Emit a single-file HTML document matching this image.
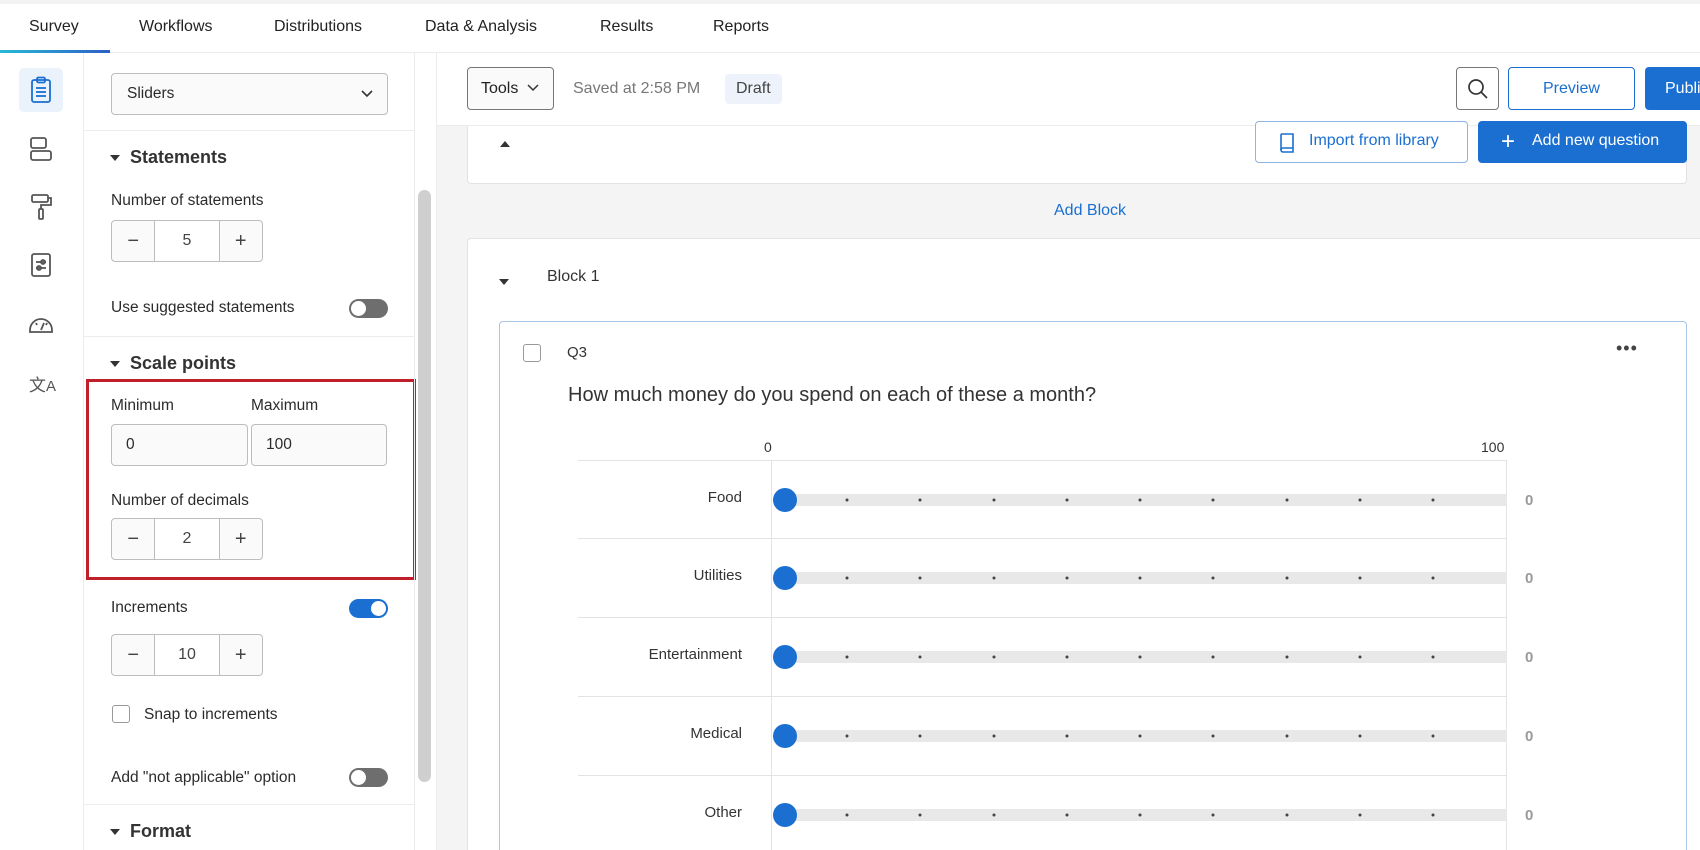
<!DOCTYPE html>
<html style="width:1700px;height:850px;overflow:hidden"><head><meta charset="utf-8"><style>
*{box-sizing:border-box;margin:0;padding:0}
html,body{width:1700px;height:850px;overflow:hidden}
body{background:#fff;font-family:"Liberation Sans",sans-serif;color:#2b2b2b;position:relative}
.a{position:absolute}
.t{position:absolute;white-space:nowrap}
.nav{font-size:16px;color:#222;top:18px}
.lbl{font-size:15.5px;color:#2b2b2b}
.hdr{font-size:18px;font-weight:bold;color:#333}
.box{position:absolute;border:1px solid #bdbdbd;border-radius:4px;background:#fafafa}
.step{position:absolute;width:152px;height:42px;border:1px solid #bdbdbd;border-radius:4px;background:#fafafa;display:flex;font-size:16px}
.step div{display:flex;align-items:center;justify-content:center;color:#444}
.step .m{width:44px;border-right:1px solid #bdbdbd;font-size:20px}
.step .v{width:65px;background:#fff;border-right:1px solid #bdbdbd}
.step .p{width:43px;font-size:20px}
.tog{position:absolute;width:39px;height:19px;border-radius:10px;background:#6e6e6e}
.tog::after{content:"";position:absolute;left:2px;top:2px;width:15px;height:15px;border-radius:50%;background:#fff}
.tog.on{background:#1a6fd1}
.tog.on::after{left:22px}
.tri{position:absolute;width:0;height:0;border-left:5px solid transparent;border-right:5px solid transparent;border-top:6px solid #333}
.row{position:absolute;left:578px;width:929px;height:74px;border-top:1px solid #e3e3e3}
.rl{position:absolute;font-size:15px;color:#333}
.track{position:absolute;left:785px;width:722px;height:12px;background:#e8e8e8}
.hd{position:absolute;left:773px;width:24px;height:24px;border-radius:50%;background:#1a6fd1}
.val{position:absolute;left:1525px;font-size:15px;color:#9a9a9a;font-weight:bold}
</style></head><body>
<div class="a" style="left:0;top:0;width:1700px;height:850px;overflow:hidden">
<div class="a" style="left:0;top:0;width:1700px;height:4px;background:#f3f3f3"></div>
<div class="a" style="left:0;top:52px;width:1700px;height:1px;background:#ececec"></div>
<div class="t nav" style="left:29px">Survey</div>
<div class="t nav" style="left:139px">Workflows</div>
<div class="t nav" style="left:274px">Distributions</div>
<div class="t nav" style="left:425px">Data &amp; Analysis</div>
<div class="t nav" style="left:600px">Results</div>
<div class="t nav" style="left:713px">Reports</div>
<div class="a" style="left:0;top:50px;width:110px;height:3px;background:linear-gradient(90deg,#28b9d6,#2c5fc8)"></div>

<div class="a" style="left:83px;top:53px;width:1px;height:797px;background:#ececec"></div>
<div class="a" style="left:19px;top:68px;width:44px;height:44px;border-radius:5px;background:#eaf2fc"></div>
<svg class="a" style="left:28px;top:76px" width="26" height="28" viewBox="0 0 26 28" fill="none" stroke="#1a6fd1" stroke-width="1.8"><rect x="4" y="4" width="18" height="22" rx="2"/><rect x="9" y="1.5" width="8" height="5" rx="1.5"/><line x1="8" y1="12" x2="18" y2="12"/><line x1="8" y1="16" x2="18" y2="16"/><line x1="8" y1="20" x2="18" y2="20"/></svg>
<svg class="a" style="left:28px;top:135px" width="26" height="28" viewBox="0 0 26 28" fill="none" stroke="#555" stroke-width="1.8"><rect x="3" y="3" width="15" height="10" rx="2"/><rect x="3" y="16" width="20" height="9" rx="2"/></svg>
<svg class="a" style="left:28px;top:192px" width="26" height="30" viewBox="0 0 26 30" fill="none" stroke="#555" stroke-width="1.8"><rect x="4" y="3" width="16" height="7" rx="1.5"/><path d="M20 6h3v7H13v4"/><rect x="11" y="17" width="4" height="10" rx="1"/></svg>
<svg class="a" style="left:28px;top:251px" width="26" height="28" viewBox="0 0 26 28" fill="none" stroke="#555" stroke-width="1.8"><rect x="4" y="3" width="18" height="22" rx="2"/><line x1="8" y1="11" x2="18" y2="11"/><circle cx="15" cy="11" r="2"/><line x1="8" y1="17" x2="18" y2="17"/><circle cx="11" cy="17" r="2"/></svg>
<svg class="a" style="left:27px;top:311px" width="28" height="24" viewBox="0 0 28 24" fill="none" stroke="#555" stroke-width="1.8"><path d="M3 19a11 11 0 0 1 22 0v2H3z"/><line x1="14" y1="19" x2="17" y2="12"/><line x1="9" y1="12" x2="10" y2="14"/><line x1="19" y1="14" x2="20" y2="12"/></svg>
<div class="t" style="left:29px;top:371px;font-size:17px;color:#555;font-family:'Liberation Sans','Noto Sans CJK SC',sans-serif">文<span style="font-size:15px">A</span></div>

<div class="box" style="left:111px;top:73px;width:277px;height:42px;background:#fafafa"></div>
<div class="t lbl" style="left:127px;top:85px">Sliders</div>
<svg class="a" style="left:360px;top:89px" width="14" height="10" viewBox="0 0 14 10" fill="none" stroke="#333" stroke-width="1.6"><path d="M2 2l5 5 5-5"/></svg>
<div class="a" style="left:84px;top:130px;width:330px;height:1px;background:#ededed"></div>
<div class="tri" style="left:110px;top:155px"></div>
<div class="t hdr" style="left:130px;top:147px">Statements</div>
<div class="t lbl" style="left:111px;top:192px">Number of statements</div>
<div class="step" style="left:111px;top:220px"><div class="m">−</div><div class="v">5</div><div class="p">+</div></div>
<div class="t lbl" style="left:111px;top:299px">Use suggested statements</div>
<div class="tog" style="left:349px;top:299px"></div>
<div class="a" style="left:84px;top:336px;width:330px;height:1px;background:#ededed"></div>
<div class="tri" style="left:110px;top:361px"></div>
<div class="t hdr" style="left:130px;top:353px">Scale points</div>
<div class="a" style="left:86px;top:379px;width:330px;height:201px;border:3px solid #c0202a"></div>
<div class="t lbl" style="left:111px;top:397px">Minimum</div>
<div class="t lbl" style="left:251px;top:397px">Maximum</div>
<div class="box" style="left:111px;top:424px;width:137px;height:42px"></div>
<div class="t lbl" style="left:126px;top:436px">0</div>
<div class="box" style="left:251px;top:424px;width:136px;height:42px"></div>
<div class="t lbl" style="left:266px;top:436px">100</div>
<div class="t lbl" style="left:111px;top:492px">Number of decimals</div>
<div class="step" style="left:111px;top:518px"><div class="m">−</div><div class="v">2</div><div class="p">+</div></div>
<div class="t lbl" style="left:111px;top:599px">Increments</div>
<div class="tog on" style="left:349px;top:599px"></div>
<div class="step" style="left:111px;top:634px"><div class="m">−</div><div class="v">10</div><div class="p">+</div></div>
<div class="a" style="left:112px;top:705px;width:18px;height:18px;border:1px solid #999;border-radius:3px;background:#fff"></div>
<div class="t lbl" style="left:144px;top:706px">Snap to increments</div>
<div class="t lbl" style="left:111px;top:769px">Add "not applicable" option</div>
<div class="tog" style="left:349px;top:768px"></div>
<div class="a" style="left:84px;top:804px;width:330px;height:1px;background:#ededed"></div>
<div class="tri" style="left:110px;top:829px"></div>
<div class="t hdr" style="left:130px;top:821px">Format</div>
<div class="a" style="left:414px;top:53px;width:1px;height:797px;background:#ececec"></div>
<div class="a" style="left:418px;top:190px;width:13px;height:592px;border-radius:7px;background:#cfcfcf"></div>
<div class="a" style="left:436px;top:53px;width:1px;height:797px;background:#ececec"></div>

<div class="a" style="left:437px;top:53px;width:1263px;height:797px;background:#f4f4f4"></div>
<div class="a" style="left:467px;top:110px;width:1220px;height:74px;background:#fff;border:1px solid #e2e2e2;border-radius:4px"></div>
<div class="a" style="left:437px;top:53px;width:1263px;height:73px;background:#fff;border-bottom:1px solid #ececec"></div>
<div class="a" style="left:467px;top:67px;width:87px;height:43px;border:1px solid #777;border-radius:4px;background:#fafafa"></div>
<div class="t" style="left:481px;top:80px;font-size:16px;color:#222">Tools</div>
<svg class="a" style="left:527px;top:84px" width="12" height="8" viewBox="0 0 12 8" fill="none" stroke="#333" stroke-width="1.5"><path d="M1 1l5 5 5-5"/></svg>
<div class="t" style="left:573px;top:80px;font-size:16px;color:#777">Saved at 2:58 PM</div>
<div class="a" style="left:725px;top:74px;width:57px;height:30px;background:#eef3fb;border-radius:4px"></div>
<div class="t" style="left:736px;top:80px;font-size:16px;color:#444">Draft</div>
<div class="a" style="left:1456px;top:67px;width:43px;height:43px;border:1px solid #777;border-radius:4px;background:#fff"></div>
<svg class="a" style="left:1466px;top:77px" width="24" height="24" viewBox="0 0 24 24" fill="none" stroke="#333" stroke-width="1.7"><circle cx="10" cy="10" r="7"/><line x1="15" y1="15" x2="21" y2="21"/></svg>
<div class="a" style="left:1508px;top:67px;width:127px;height:43px;border:1px solid #1a6fd1;border-radius:4px;background:#fff"></div>
<div class="t" style="left:1543px;top:80px;font-size:16px;color:#1a6fd1">Preview</div>
<div class="a" style="left:1645px;top:67px;width:55px;height:43px;border-radius:4px 0 0 4px;background:#1a6fd1;overflow:hidden"><span style="position:absolute;left:20px;top:13px;font-size:16px;color:#fff">Publish</span></div>

<div class="a" style="left:500px;top:141px;width:0;height:0;border-left:5px solid transparent;border-right:5px solid transparent;border-bottom:6px solid #333"></div>
<div class="a" style="left:1255px;top:121px;width:213px;height:42px;border:1px solid #8fb3e3;border-radius:4px;background:#fff"></div>
<svg class="a" style="left:1278px;top:131px" width="18" height="22" viewBox="0 0 18 22" fill="none" stroke="#1a6fd1" stroke-width="1.6"><path d="M3 3h12v14H5a2 2 0 0 0 0 4h10v-4"/><path d="M3 3v16"/></svg>
<div class="t" style="left:1309px;top:132px;font-size:16px;color:#1a6fd1">Import from library</div>
<div class="a" style="left:1478px;top:121px;width:209px;height:42px;border-radius:4px;background:#1a6fd1"></div>
<div class="t" style="left:1501px;top:128px;font-size:24px;color:#fff;font-weight:300">+</div>
<div class="t" style="left:1532px;top:132px;font-size:16px;color:#fff">Add new question</div>
<div class="t" style="left:1054px;top:202px;font-size:16px;color:#1a6fd1">Add Block</div>

<div class="a" style="left:467px;top:238px;width:1233px;height:612px;background:#fff;border-top:1px solid #e2e2e2;border-left:1px solid #e2e2e2;border-radius:4px 0 0 0"></div>
<div class="tri" style="left:499px;top:279px"></div>
<div class="t" style="left:547px;top:268px;font-size:16px;color:#333">Block 1</div>
<div class="a" style="left:499px;top:321px;width:1188px;height:529px;border:1.5px solid #a9c6ec;border-bottom:none;border-radius:4px 4px 0 0;background:#fff"></div>
<div class="a" style="left:523px;top:344px;width:18px;height:18px;border:1px solid #999;border-radius:3px"></div>
<div class="t" style="left:567px;top:344px;font-size:15px;color:#333">Q3</div>
<div class="t" style="left:1616px;top:338px;font-size:18px;color:#444;letter-spacing:1px">•••</div>
<div class="t" style="left:568px;top:384px;font-size:20px;color:#333">How much money do you spend on each of these a month?</div>
<div class="t" style="left:764px;top:439px;font-size:14px;color:#333">0</div>
<div class="t" style="left:1481px;top:439px;font-size:14px;color:#333">100</div>
<div class="a" style="left:771px;top:461px;width:1px;height:389px;background:#e3e3e3"></div>
<div class="a" style="left:1506px;top:461px;width:1px;height:389px;background:#e3e3e3"></div>

<div class="row" style="top:460px"></div>
<div class="row" style="top:538px"></div>
<div class="row" style="top:617px"></div>
<div class="row" style="top:696px"></div>
<div class="row" style="top:775px"></div>

<div class="t rl" style="top:489px;right:958px">Food</div>
<div class="t rl" style="top:567px;right:958px">Utilities</div>
<div class="t rl" style="top:646px;right:958px">Entertainment</div>
<div class="t rl" style="top:725px;right:958px">Medical</div>
<div class="t rl" style="top:804px;right:958px">Other</div>

<div class="track" style="top:494px"></div><div class="hd" style="top:488px"></div><div class="val" style="top:492px">0</div>
<div class="track" style="top:572px"></div><div class="hd" style="top:566px"></div><div class="val" style="top:570px">0</div>
<div class="track" style="top:651px"></div><div class="hd" style="top:645px"></div><div class="val" style="top:649px">0</div>
<div class="track" style="top:730px"></div><div class="hd" style="top:724px"></div><div class="val" style="top:728px">0</div>
<div class="track" style="top:809px"></div><div class="hd" style="top:803px"></div><div class="val" style="top:807px">0</div>

<svg class="a" style="left:0;top:0" width="1700" height="850">
<g fill="#444">
<g id="d"><circle cx="847" cy="500" r="1.5"/><circle cx="920" cy="500" r="1.5"/><circle cx="994" cy="500" r="1.5"/><circle cx="1067" cy="500" r="1.5"/><circle cx="1140" cy="500" r="1.5"/><circle cx="1213" cy="500" r="1.5"/><circle cx="1287" cy="500" r="1.5"/><circle cx="1360" cy="500" r="1.5"/><circle cx="1433" cy="500" r="1.5"/></g>
<use href="#d" y="78"/><use href="#d" y="157"/><use href="#d" y="236"/><use href="#d" y="315"/>
</g></svg>
</div>
</body></html>
